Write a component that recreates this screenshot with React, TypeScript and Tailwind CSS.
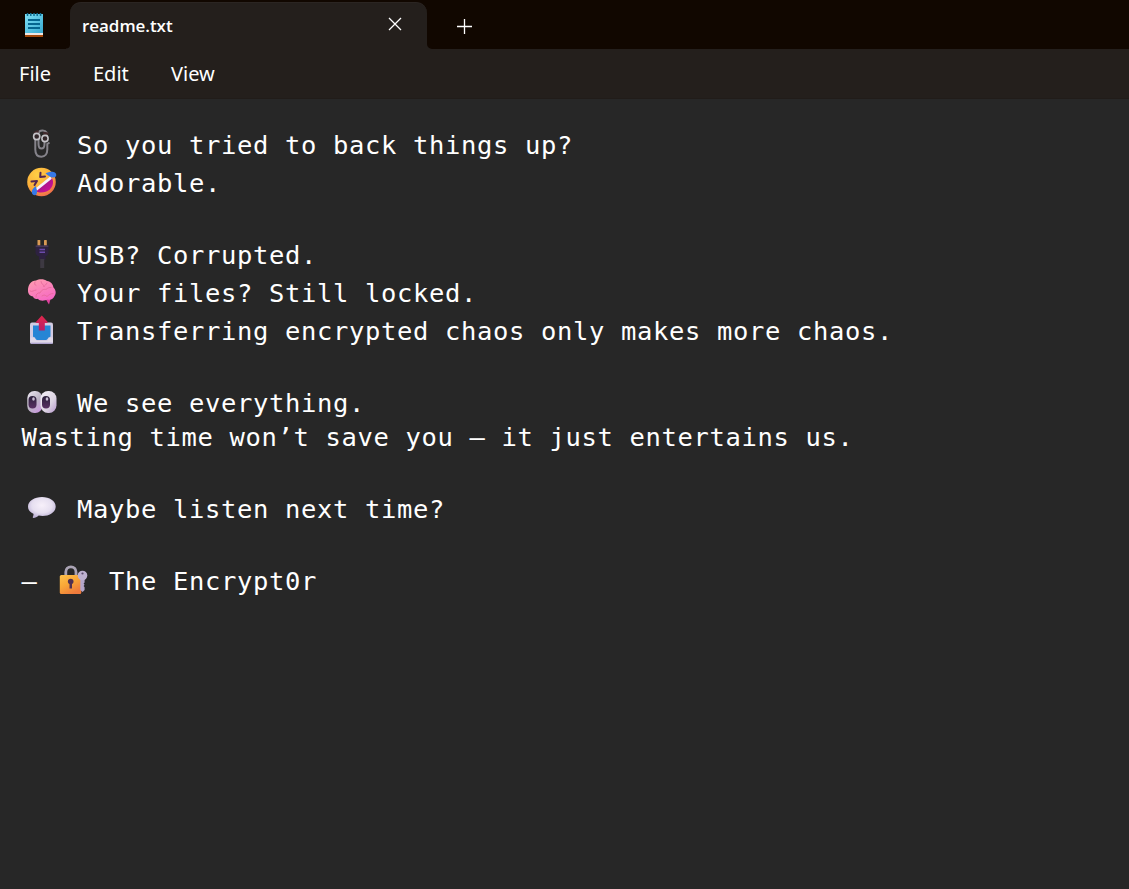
import type { ReactNode } from "react";

function NotepadIcon() {
  return (
    <svg width="20" height="26" viewBox="0 0 20 26" className="block">
      <defs>
        <linearGradient id="np" x1="0" y1="0" x2="1" y2="1">
          <stop offset="0" stopColor="#7fe0f5" />
          <stop offset="1" stopColor="#37a9d0" />
        </linearGradient>
      </defs>
      <rect x="1" y="20" width="18" height="5" rx="0.6" fill="#a4480a" />
      <rect x="1" y="20" width="18" height="3" fill="#f0e6e2" />
      <rect x="1" y="2" width="18" height="19" fill="url(#np)" />
      <path d="M3.5 1v3M6.8 1v3M10 1v3M13.2 1v3M16.5 1v3" stroke="#0d6f94" strokeWidth="1.5" />
      <path d="M4 8h12M4 12h12M4 16h12" stroke="#04658f" strokeWidth="2" />
    </svg>
  );
}

function Clip() {
  return (
    <svg width="30" height="30" viewBox="0 0 30 30">
      <path d="M11.5 9v6c0 2 .4 4.500 3 4.500s3-2.500 3-4.500v-4" fill="none" stroke="#85838a" strokeWidth="2" />
      <path d="M8.300 10v10.500c0 4.300 2 7.200 6 7.200s6-3.200 6-7.200V15l2.200-1.500M11.500 4c1-3 6.500-3.400 8.300-.2v4" fill="none" stroke="#85838a" strokeWidth="2" />
      <path d="M7 4.300l4.500-2.100M16 4l5.500.8" stroke="#412a2d" strokeWidth="2.400" />
      <circle cx="9.700" cy="7.500" r="3.100" fill="#33272a" stroke="#c4c3c8" strokeWidth="1.600" />
      <circle cx="18" cy="9.500" r="3.100" fill="#33272a" stroke="#c4c3c8" strokeWidth="1.600" />
    </svg>
  );
}

function Rofl() {
  return (
    <svg width="30" height="30" viewBox="0 0 30 30">
      <defs>
        <radialGradient id="face" cx="0.35" cy="0.25" r="0.8">
          <stop offset="0" stopColor="#ffcf45" />
          <stop offset="0.6" stopColor="#fbae3a" />
          <stop offset="1" stopColor="#ee6a4c" />
        </radialGradient>
        <linearGradient id="mouth" x1="0" y1="0" x2="1" y2="1">
          <stop offset="0" stopColor="#8a1580" />
          <stop offset="1" stopColor="#d6109a" />
        </linearGradient>
      </defs>
      <circle cx="14.5" cy="15" r="14.3" fill="url(#face)" />
      <path d="M9 24L24.500 10.500c3.700 5 .3 12-5 14-3.700 1.300-8 1.500-10.500-.5z" fill="url(#mouth)" />
      <path d="M9.800 23.800L8.700 21.300 23.200 9.500l1.600 2.200z" fill="#f6f0fa" />
      <path d="M4.500 14.500l5.500-.5-2.500 4M13.500 5.800l-.3 4.200 4.800-.6" fill="none" stroke="#55264f" strokeWidth="2" strokeLinecap="round" strokeLinejoin="round" />
      <path d="M18.500 6.300c3-1.500 7.500-2.300 9.700-.5 2 2 1 4.500-1.700 4.700-2.500.3-5-1.400-8-4.200z" fill="#3679e8" />
      <path d="M8.500 19c1.500 3 2.300 7.500.5 8.800-1.500 1-4 0-4.200-2.500-.1-2.500 1.700-4 3.700-6.300z" fill="#3679e8" />
    </svg>
  );
}

function Plug() {
  return (
    <svg width="30" height="30" viewBox="0 0 30 30">
      <rect x="10.500" y="1" width="2.800" height="7" rx="0.600" fill="#d89a55" />
      <rect x="17" y="1" width="2.800" height="7" rx="0.600" fill="#d89a55" />
      <path d="M8.500 6.500h13v7c0 2-1.500 3.300-3 4V21h-6.500v-3.500c-1.800-.7-3.500-2-3.500-4z" fill="#2d2140" />
      <path d="M8.700 7.200h12.600" stroke="#493b5a" strokeWidth="1.400" />
      <path d="M12.500 10.500h5.500M12.500 13.300h5.500" stroke="#6b4bab" strokeWidth="1.600" />
      <rect x="13.200" y="20" width="4" height="9" fill="#3d3942" />
    </svg>
  );
}

function Brain() {
  return (
    <svg width="30" height="30" viewBox="0 0 30 30">
      <defs>
        <linearGradient id="brain" x1="0.200" y1="0" x2="0.700" y2="1">
          <stop offset="0" stopColor="#ff9bb0" />
          <stop offset="1" stopColor="#f668c4" />
        </linearGradient>
      </defs>
      <path d="M18 21l4 6.500 1.500-5.500z" fill="#e0409e" />
      <path d="M1 14C.8 8 4 3.500 9 3.500 12 1.800 17 1.500 20 4c4 .5 6 3.500 6.500 6.500 2.500 2.500 3 6 1 8.500-1 3-4 4.500-7 3.500-3 1.500-8 1.800-9.500-.8-2 .8-4.500 0-5-2.200-2.500-.5-4.800-2-5-5.500z" fill="url(#brain)" />
      <path d="M3 14c2 1.500 4-1 6-1M8 5c-1 2 0 3 1 3.500M9 20c-.5-3 2-4.500 4-4 1.500-3.500 4.500-4 6-3.500 2-2 3.500-2 5-2M14 4.500c0 3 3 2.500 3 5M20 6c-1 2-2 2-3 3.500M15 19c2-1.500 3-1 5 .5 2-1.500 3-3 6-3" fill="none" stroke="#e66a9c" strokeWidth="0.900" strokeLinecap="round" />
    </svg>
  );
}

function Outbox() {
  return (
    <svg width="30" height="30" viewBox="0 0 30 30">
      <defs>
        <linearGradient id="arrow" x1="0" y1="0" x2="0" y2="1">
          <stop offset="0" stopColor="#e2274a" />
          <stop offset="1" stopColor="#b81c68" />
        </linearGradient>
      </defs>
      <rect x="3" y="7.500" width="23" height="21.500" rx="2" fill="#d3cbe2" />
      <path d="M6 10.500h17.500v10.500c0 1-1 1.500-2 1.500-1 2-2 2.500-3 2.500h-7.500c-1.500 0-2.500-.5-3-2.500-1 0-2-.5-2-1.500z" fill="#2685d5" />
      <path d="M3.500 22.500h4c1 2.500 2 3.500 4 3.500h7c2 0 3-1 3.500-3.500h4V27c0 1-.8 2-2 2H5c-1 0-1.500-1-1.500-2z" fill="#e0d9e9" />
      <path d="M4 28.300h21.500" stroke="#aaa0cc" strokeWidth="1.300" />
      <path d="M14.800.5l5.700 6.300c.5.600.2 1.200-.5 1.200h-2.200v7.500h-6V8H9.500c-.8 0-1-.7-.4-1.300z" fill="url(#arrow)" />
    </svg>
  );
}

function Eyes() {
  return (
    <svg width="30" height="30" viewBox="0 0 30 30">
      <defs>
        <linearGradient id="eyeL" x1="0" y1="0" x2="0.700" y2="1">
          <stop offset="0" stopColor="#eeeaf3" />
          <stop offset="0.600" stopColor="#bcb4c5" />
          <stop offset="1" stopColor="#c99add" />
        </linearGradient>
        <linearGradient id="eyeR" x1="0" y1="0" x2="1" y2="1">
          <stop offset="0" stopColor="#f5f1f8" />
          <stop offset="0.600" stopColor="#dcd4e2" />
          <stop offset="1" stopColor="#b696ce" />
        </linearGradient>
        <linearGradient id="pupil" x1="0" y1="0" x2="0" y2="1">
          <stop offset="0" stopColor="#2b213b" />
          <stop offset="1" stopColor="#593064" />
        </linearGradient>
      </defs>
      <rect x="0.300" y="4" width="15" height="22" rx="7" fill="url(#eyeL)" />
      <rect x="13.500" y="4" width="16" height="22" rx="7.500" fill="url(#eyeR)" />
      <rect x="1.500" y="9" width="8" height="12.500" rx="4" fill="url(#pupil)" />
      <rect x="15" y="9" width="8" height="12.500" rx="4" fill="url(#pupil)" />
      <ellipse cx="6.500" cy="12" rx="1.300" ry="1.700" fill="#c8bdd3" />
      <ellipse cx="20" cy="12" rx="1.300" ry="1.700" fill="#c8bdd3" />
    </svg>
  );
}

function Bubble() {
  return (
    <svg width="30" height="30" viewBox="0 0 30 30">
      <defs>
        <radialGradient id="bubble" cx="0.500" cy="0.400" r="0.600">
          <stop offset="0" stopColor="#f7f0fa" />
          <stop offset="0.600" stopColor="#e6dff0" />
          <stop offset="1" stopColor="#bcb0d5" />
        </radialGradient>
      </defs>
      <path d="M15 4c7.500 0 13.700 4 13.700 9.600 0 5.500-6 9.400-13 9.400-1.700 0-3-.2-4-.4-1.500 1.400-3.700 2.400-5.200 2.400-.7 0-.9-.6-.6-1.200.5-1.200.8-2.200.5-3C3.500 19.300 1 17.500 1 13.500 1 8 7.500 4 15 4z" fill="url(#bubble)" />
    </svg>
  );
}

function LockKey() {
  return (
    <svg width="30" height="30" viewBox="0 0 30 30">
      <defs>
        <linearGradient id="lock" x1="0" y1="0" x2="0.600" y2="1">
          <stop offset="0" stopColor="#ffc24a" />
          <stop offset="0.500" stopColor="#f9a737" />
          <stop offset="1" stopColor="#ef7a3c" />
        </linearGradient>
      </defs>
      <path d="M6.800 12V7c0-3 2.200-5.200 5.100-5.200S17 4 17 7v5" fill="none" stroke="#aaa3b4" strokeWidth="2.800" />
      <rect x="0.800" y="10" width="21.500" height="19" rx="1.500" fill="url(#lock)" />
      <circle cx="11.700" cy="16.500" r="2.800" fill="#513152" />
      <path d="M10.500 17.500h2.500v6h-2.500z" fill="#513152" />
      <path d="M21.300 14h4.300v3.500l-1 1 1 1.200-1 1.300 1 1.200V25l-2 2-2.300-2z" fill="#b4a5c9" />
      <circle cx="23.500" cy="10.500" r="4.800" fill="#beb1d0" />
      <circle cx="23.500" cy="8.500" r="1.100" fill="#5a4a6b" />
    </svg>
  );
}

function Line({ icon, children }: { icon?: ReactNode; children?: ReactNode }) {
  if (!icon) return <div className="h-[34px] whitespace-pre">{children}</div>;
  return (
    <div className="flex h-[38px] items-end whitespace-pre">
      <span className="flex h-[38px] w-[55.500px] items-center pl-[5px] pt-[1px]">{icon}</span>
      <span>{children}</span>
    </div>
  );
}

export default function App() {
  return (
    <div className="flex h-[889px] w-[1129px] flex-col overflow-hidden bg-[#272727] font-['Open_Sans',sans-serif] text-white">
      <header className="flex h-[49px] shrink-0 bg-[#110700]">
        <div className="flex w-[66px] items-start pl-[24px] pt-[12px]">
          <NotepadIcon />
        </div>
        <div className="flex items-end pt-[2px]">
          <svg width="4" height="5" viewBox="0 0 4 5" className="block">
            <path d="M4 0v5H0V4.500a4 4 0 0 0 4-4z" fill="#241f1c" />
          </svg>
          <div className="flex h-[47px] w-[357px] items-center justify-between rounded-t-[11px] border-t border-[#2b2522] bg-[#241f1c] pl-[12px] pr-[25px]">
            <span className="text-[17px] font-semibold tracking-[-0.050px]">readme.txt</span>
            <svg width="14" height="14" viewBox="0 0 14 14" className="mb-[4px]">
              <path d="M1 1l12 12M13 1L1 13" stroke="#fff" strokeWidth="1.300" />
            </svg>
          </div>
          <svg width="5" height="5" viewBox="0 0 5 5" className="block">
            <path d="M0 0v5h5a5 5 0 0 1-5-5z" fill="#241f1c" />
          </svg>
        </div>
        <div className="flex pl-[25px] pt-[18px]">
          <svg width="16" height="16" viewBox="0 0 16 16">
            <path d="M7.500 1v15M0 8.500h15" stroke="#fff" strokeWidth="1.300" />
          </svg>
        </div>
      </header>
      <nav className="flex h-[50px] shrink-0 items-center border-b border-[#211c19] bg-[#241f1c] pl-[19px] pt-[1px] font-['Noto_Sans',sans-serif] text-[20px]">
        <span className="w-[74px]">File</span>
        <span className="w-[78px]">Edit</span>
        <span>View</span>
      </nav>
      <main className="flex-1 pl-[21.500px] pt-[25px] font-['DejaVu_Sans_Mono',monospace] text-[25.500px] leading-[34px] tracking-[0.650px]">
        <Line icon={<Clip />}>So you tried to back things up?</Line>
        <Line icon={<Rofl />}>Adorable.</Line>
        <Line />
        <Line icon={<Plug />}>USB? Corrupted.</Line>
        <Line icon={<Brain />}>Your files? Still locked.</Line>
        <Line icon={<Outbox />}>Transferring encrypted chaos only makes more chaos.</Line>
        <Line />
        <Line icon={<Eyes />}>We see everything.</Line>
        <Line>Wasting time won’t save you — it just entertains us.</Line>
        <Line />
        <Line icon={<Bubble />}>Maybe listen next time?</Line>
        <Line />
        <div className="flex items-end">
          <span>—</span>
          <span className="flex-1 pl-[16px]">
            <Line icon={<LockKey />}>The Encrypt0r</Line>
          </span>
        </div>
      </main>
    </div>
  );
}
